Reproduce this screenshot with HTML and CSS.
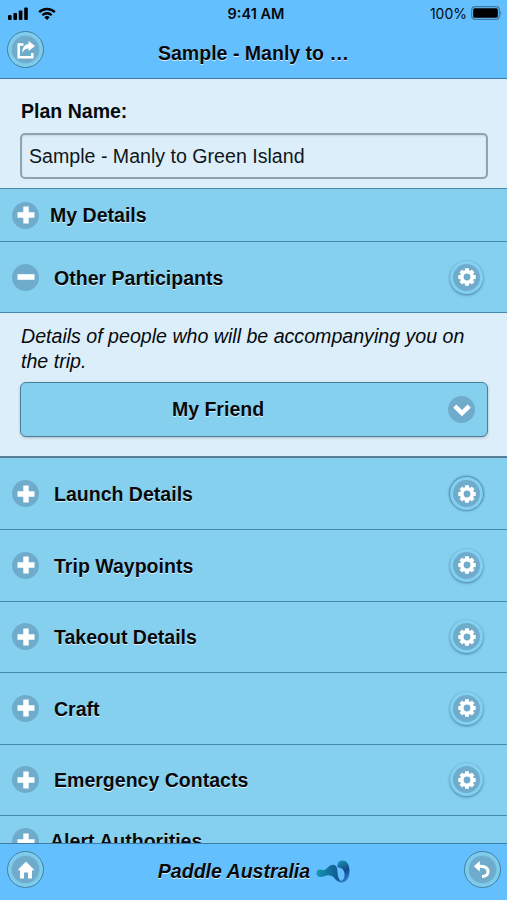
FILE: index.html
```html
<!DOCTYPE html>
<html lang="en">
<head>
    <meta charset="UTF-8">
    <meta name="viewport" content="width=device-width, initial-scale=1.0">
    <title>Paddle Australia - Trip Plan</title>
    <link rel="stylesheet" href="styles.css">
</head>
<body>
    <!-- shared icons -->
    <svg class="sprite" width="0" height="0">
        <symbol id="plus" viewBox="0 0 18 18"><path d="M6.3 0.5h5.4v5.8h5.8v5.4h-5.8v5.8H6.3v-5.8H0.5V6.3h5.8z" fill="#fff"/></symbol>
        <symbol id="minus" viewBox="0 0 18 18"><path d="M0.5 6.2h17v5.6H0.5z" fill="#fff"/></symbol>
        <symbol id="gear" viewBox="0 0 18 18">
            <path d="M9 0.3V17.7M0.3 9H17.7M2.85 2.85L15.15 15.15M15.15 2.85L2.85 15.15" stroke="#fff" stroke-width="3.9"/>
            <circle cx="9" cy="9" r="7.1" fill="#fff"/>
            <circle cx="9" cy="9" r="3.4" fill="#6faccc"/>
        </symbol>
    </svg>

    <header class="header">
        <div class="status">
            <div class="status-left">
                <svg width="20" height="13" viewBox="0 0 20 13"><rect x="0" y="8" width="3.6" height="5" rx="1"/><rect x="5.4" y="6" width="3.6" height="7" rx="1"/><rect x="10.8" y="3.5" width="3.6" height="9.5" rx="1"/><rect x="16.2" y="0.5" width="3.6" height="12.5" rx="1"/></svg>
                <svg width="18" height="13" viewBox="0 0 18 13" fill="none" stroke="#000"><path d="M1.2 5.2a11 11 0 0 1 15.6 0" stroke-width="2.5"/><path d="M4.3 8.2a6.7 6.7 0 0 1 9.4 0" stroke-width="2.3"/><path d="M6.3 10.2a3.9 3.9 0 0 1 5.4 0L9 12.9z" fill="#000" stroke="none"/></svg>
            </div>
            <div class="status-time">9:41 AM</div>
            <div class="status-right">
                <span>100%</span>
                <svg width="31" height="14" viewBox="0 0 31 14"><rect x="0.7" y="0.7" width="27.6" height="12.6" rx="3.4" fill="none" stroke="#3f78a0" stroke-width="1.2"/><rect x="2.2" y="2.2" width="24.6" height="9.6" rx="1.5"/><path d="M29.5 4.5q1.8 2.5 0 5z" fill="#3f78a0"/></svg>
            </div>
        </div>
        <div class="bar">
            <a class="round-btn"><span class="disc"><svg width="18" height="18" viewBox="0 0 18 18"><path d="M6.5 3.6H1.7v12.7h13.6V12" fill="none" stroke="#fff" stroke-width="2.5"/><path d="M11.6 0l6.4 5-6.4 5V7.4c-3 0-4.8 1.4-6.3 4.6 0-5 2-8.8 6.300-9.100z" fill="#fff"/></svg></span></a>
            <h1>Sample - Manly to …</h1>
            <span class="spacer"></span>
        </div>
    </header>

    <main class="content">
        <section class="plan">
            <label for="plan">Plan Name:</label>
            <input type="text" id="plan" value="Sample - Manly to Green Island">
        </section>

        <div class="row row-short"><span class="disc"><svg><use href="#plus"/></svg></span><h3>My Details</h3></div>
        <div class="row row-open"><span class="disc"><svg><use href="#minus"/></svg></span><h3>Other Participants</h3><a class="gear-btn"><span class="disc"><svg><use href="#gear"/></svg></span></a></div>
        <section class="panel">
            <p>Details of people who will be accompanying you on the trip.</p>
            <div class="select">
                <span class="select-text">My Friend</span>
                <span class="disc"><svg viewBox="0 0 18 18"><path d="M1.8 5.2L9 12.2l7.2-7" fill="none" stroke="#fff" stroke-width="4.4"/></svg></span>
            </div>
        </section>
        <div class="row row-after"><span class="disc"><svg><use href="#plus"/></svg></span><h3>Launch Details</h3><a class="gear-btn active"><span class="disc"><svg><use href="#gear"/></svg></span></a></div>
        <div class="row"><span class="disc"><svg><use href="#plus"/></svg></span><h3>Trip Waypoints</h3><a class="gear-btn"><span class="disc"><svg><use href="#gear"/></svg></span></a></div>
        <div class="row"><span class="disc"><svg><use href="#plus"/></svg></span><h3>Takeout Details</h3><a class="gear-btn"><span class="disc"><svg><use href="#gear"/></svg></span></a></div>
        <div class="row"><span class="disc"><svg><use href="#plus"/></svg></span><h3>Craft</h3><a class="gear-btn"><span class="disc"><svg><use href="#gear"/></svg></span></a></div>
        <div class="row"><span class="disc"><svg><use href="#plus"/></svg></span><h3>Emergency Contacts</h3><a class="gear-btn"><span class="disc"><svg><use href="#gear"/></svg></span></a></div>
        <div class="row row-short row-last"><span class="disc"><svg><use href="#plus"/></svg></span><h3>Alert Authorities</h3></div>
    </main>

    <footer class="footer">
        <a class="round-btn"><span class="disc"><svg width="18" height="18" viewBox="0 0 18 18"><path d="M9 0.5L17.5 9.3H15V17.5H11V11.5H7V17.5H3V9.3H0.5z" fill="#fff"/></svg></span></a>
        <div class="brand">
            <span>Paddle Australia</span>
            <svg width="34" height="23" viewBox="0 0 34 23">
                <defs>
                    <linearGradient id="wave" x1="0" x2="1"><stop offset="0" stop-color="#1497b0"/><stop offset="0.55" stop-color="#116f9c"/><stop offset="1" stop-color="#17508c"/></linearGradient>
                    <linearGradient id="loop" x1="0" y1="0" x2="0.3" y2="1"><stop offset="0" stop-color="#1599b5"/><stop offset="0.6" stop-color="#154a8c"/><stop offset="1" stop-color="#2a78c4"/></linearGradient>
                </defs>
                <path d="M0.5 13c0-3 2.5-4 5-3.2 3.5 1.2 5-1 6.8-3C15.5 3.5 20 4 21 8c0.8 3.5 0 9.500 4 13.500-3.500 0.300-5.300-1.500-6.800-3.500-2-2.600-4.700-3.300-7.700-2.500-2 0.600-3.500 1.500-5.500 1.500C2 17 0.500 15.500 0.500 13z" fill="url(#wave)"/>
                <path d="M21.500 7.500C21 3 23 0.500 26.500 0.500c4.500 0 7 4.500 7 10.500 0 7-3.500 11.500-8 11.500-2.500 0-4.200-1.500-5-4 1.500 2 3 2.700 4.700 2.200 2.800-0.800 3.600-4 3.300-7.200-0.400-3.700-3-6-7-6z" fill="url(#loop)"/>
            </svg>
        </div>
        <a class="round-btn"><span class="disc"><svg width="18" height="18" viewBox="0 0 18 18"><path d="M5.5 5.3C11.5 4.800 15 6.800 15 10.500c0 3.200-2.300 5-6 5" fill="none" stroke="#fff" stroke-width="3"/><path d="M6.800 0v10.600L0.800 5.300z" fill="#fff"/></svg></span></a>
    </footer>
</body>
</html>
```
FILE: styles.css
```css
* {
    box-sizing: border-box;
}
body {
    margin: 0;
    height: 900px;
    display: flex;
    flex-direction: column;
    overflow: hidden;
    font-family: "Liberation Sans", Arial, sans-serif;
    font-size: 19.55px;
    color: #060a0d;
    background: #dceef9;
}
h1, h3, p {
    margin: 0;
    font-size: 19.55px;
}
h1, h3, .select-text, .brand {
    text-shadow: 0 1px 0 #d8eefb;
}
.sprite {
    display: none;
}

/* header */
.header {
    height: 79px;
    flex: none;
    background: #64bffe;
    border-bottom: 1px solid #3d7ba8;
}
.status {
    height: 26px;
    padding: 0 5px 0 8px;
    display: grid;
    grid-template-columns: 1fr auto 1fr;
    align-items: center;
    font-family: Inter, sans-serif;
    font-size: 14px;
}
.status-left {
    display: flex;
    gap: 10px;
    align-items: center;
}
.status-time {
    font-weight: 600;
    font-size: 14.5px;
    padding-left: 2px;
}
.status-right {
    display: flex;
    gap: 4px;
    align-items: center;
    justify-content: flex-end;
}
.bar {
    height: 52px;
    padding: 5px 7px 0;
    display: flex;
    align-items: flex-start;
    justify-content: space-between;
}
.bar h1 {
    line-height: 44px;
}
.spacer {
    width: 37px;
}

/* buttons */
.disc {
    width: 27px;
    height: 27px;
    flex: none;
    border-radius: 50%;
    background: #6faccc;
    display: flex;
    align-items: center;
    justify-content: center;
}
.disc svg {
    width: 18px;
    height: 18px;
}
.round-btn {
    width: 37px;
    height: 37px;
    flex: none;
    border: 1.5px solid #447f9f;
    border-radius: 50%;
    background: #7fcdec;
    display: flex;
    align-items: center;
    justify-content: center;
}
.round-btn .disc {
    box-shadow: 0 0 2px #6faccc;
}
.gear-btn {
    width: 33px;
    height: 33px;
    margin-left: auto;
    border-radius: 50%;
    background: #84d0f0;
    box-shadow: 0 1px 3px rgba(20, 70, 110, 0.6);
    display: flex;
    align-items: center;
    justify-content: center;
}
.gear-btn.active {
    box-shadow: 0 0 2px 1px rgba(20, 70, 110, 0.55);
}

/* content */
.content {
    flex: 1;
    min-height: 0;
    overflow: hidden;
}
.plan {
    height: 109px;
    padding: 20px 19px 0 20px;
}
.plan label {
    display: block;
    padding-left: 1px;
    line-height: 24px;
    font-weight: bold;
}
.plan input {
    display: block;
    width: 100%;
    height: 46px;
    margin-top: 10px;
    padding: 0 8px 0 7px;
    border: 2px solid #8fa3ae;
    border-radius: 5px;
    background: #dceef9;
    box-shadow: inset 0 1px 2px rgba(0, 0, 0, 0.1);
    color: #10161a;
    font-family: inherit;
    font-size: 19.6px;
}
.row {
    height: 71.5px;
    padding: 0 24px 0 12px;
    display: flex;
    align-items: center;
    border-top: 1px solid #4788ae;
    background: #85d0ef;
}
.row h3 {
    margin-left: 15px;
    padding-top: 2px;
}
.row-short {
    height: 53px;
}
.row-short h3 {
    margin-left: 11px;
    padding-top: 1px;
}
.row-last {
    height: 52px;
}
.row-last h3 {
    padding: 0 0 1px;
}
.row-open {
    height: 71px;
}
.row-after {
    height: 73px;
    border-top: 2px solid #567f96;
}
.panel {
    height: 144px;
    padding: 11px 19px 0 20px;
    border-top: 1px solid #4788ae;
}
.panel p {
    padding-left: 1px;
    line-height: 24.5px;
    font-size: 19.6px;
    font-style: italic;
}
.select {
    height: 55px;
    margin-top: 9px;
    padding: 0 12px;
    display: flex;
    align-items: center;
    border: 1.5px solid #4a7f9b;
    border-radius: 6px;
    background: #85d0ef;
    box-shadow: 0 1px 3px rgba(0, 0, 0, 0.2);
}
.select-text {
    flex: 1;
    text-align: center;
    padding-right: 45px;
    font-weight: bold;
}

/* footer */
.footer {
    height: 57px;
    flex: none;
    padding: 7px 6px 0 7px;
    display: flex;
    align-items: flex-start;
    justify-content: space-between;
    background: #64bffe;
    border-top: 1px solid #3d7ba8;
}
.brand {
    display: flex;
    align-items: center;
    gap: 6px;
    height: 40px;
    font-weight: bold;
    font-style: italic;
}
```
